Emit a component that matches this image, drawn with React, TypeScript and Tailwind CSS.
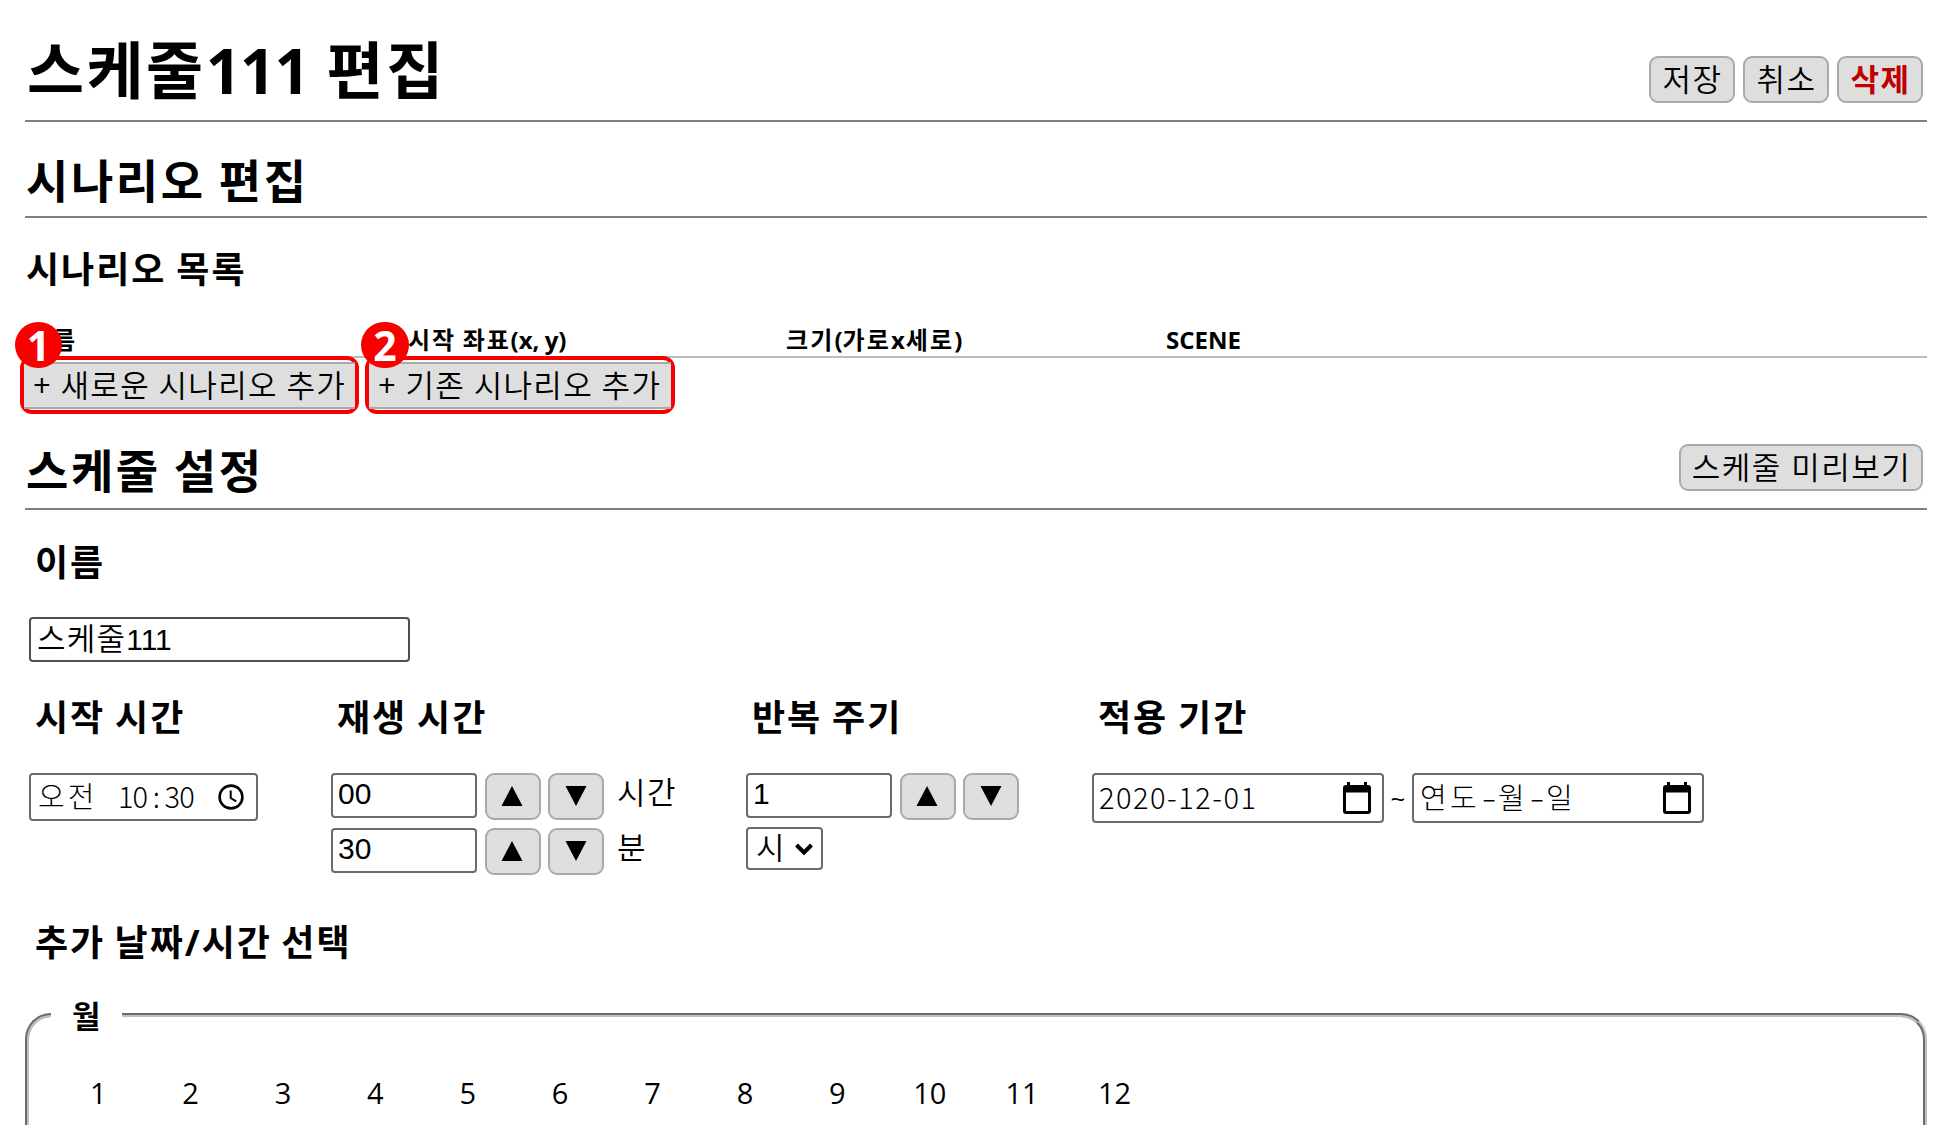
import type { ReactNode } from "react";

const months = Array.from({ length: 12 }, (_, i) => i + 1);

function Button({ children, className = "" }: { children: ReactNode; className?: string }) {
  return (
    <button
      type="button"
      className={`flex h-[47px] shrink-0 items-center justify-center rounded-[9px] border-2 border-[#a9a9a9] bg-[#dedede] pl-px text-[31px] leading-[43px] tracking-[1.5px] whitespace-nowrap ${className}`}
    >
      {children}
    </button>
  );
}

function Stepper({ value, unit }: { value: string; unit?: string }) {
  return (
    <div className="flex items-start">
      <input
        readOnly
        value={value}
        className="h-[45px] w-[146px] rounded-[4px] border-2 border-[#6b6b6b] pb-[4px] pl-[5px] font-['Liberation_Sans','Noto_Sans_CJK_KR',sans-serif] text-[30px] leading-[37px] font-normal"
      />
      <Button className="ml-2 w-[56px]">
        <svg width="22" height="20" viewBox="0 0 22 20" className="mr-[3px] mb-[2px]">
          <path d="M11 0 21.5 20H.5z" />
        </svg>
      </Button>
      <Button className="ml-[7px] w-[56px]">
        <svg width="22" height="20" viewBox="0 0 22 20" className="mr-[2px] mb-[2px]">
          <path d="M11 20 21.5 0H.5z" />
        </svg>
      </Button>
      {unit && <span className="ml-[13px] text-[31px] leading-[38px] tracking-[1.5px]">{unit}</span>}
    </div>
  );
}

function CalendarIcon() {
  return (
    <svg width="28" height="32" viewBox="0 0 28 32" className="mb-px shrink-0">
      <path
        fillRule="evenodd"
        d="M4 0h3v3h14V0h3v3h1a3 3 0 0 1 3 3v23a3 3 0 0 1-3 3H3a3 3 0 0 1-3-3V6a3 3 0 0 1 3-3h1zM3 10.500v18.500h22V10.500z"
      />
    </svg>
  );
}

function DateField({ children, className }: { children: ReactNode; className: string }) {
  return (
    <div className="flex h-[50px] w-[292px] items-center justify-between rounded-[4px] border-2 border-[#6b6b6b] pr-[11px] pl-[5px] font-['Noto_Sans_CJK_KR',sans-serif] text-[29px] leading-[42px] font-light whitespace-nowrap">
      <span className={`pb-[5px] ${className}`}>{children}</span>
      <CalendarIcon />
    </div>
  );
}

function WideHyphen() {
  return <span className="inline-block w-[18px] scale-x-150 text-center tracking-normal">-</span>;
}

function Label({ children }: { children: ReactNode }) {
  return (
    <h3 className="h-[48px] pl-[6px] text-[36px] leading-[49px] font-bold tracking-[2px] whitespace-nowrap [word-spacing:-1.5px]">
      {children}
    </h3>
  );
}

function Marked({ n, width, badge, children }: { n: number; width: string; badge: string; children: ReactNode }) {
  return (
    <div className={`relative h-[58px] ${width} rounded-[12px] border-4 border-[#f70000] py-[2px]`}>
      <button
        type="button"
        className="block h-[47px] w-full border-y-2 border-[#a9a9a9] bg-[#dedede] pl-[9px] text-left text-[31px] leading-[41px] tracking-[1.35px] whitespace-nowrap [word-spacing:-1px]"
      >
        <span className="font-normal">+</span> {children}
      </button>
      <span
        className={`absolute -top-[38px] flex h-[46px] items-center justify-center rounded-full bg-[#f70000] text-[41px] leading-[46px] font-bold text-white ${badge}`}
      >
        {n}
      </span>
    </div>
  );
}

export default function App() {
  return (
    <main className="h-[1125px] w-[1936px] overflow-hidden bg-white pr-[9px] pl-[25px] font-['Open_Sans','Noto_Sans_CJK_KR',sans-serif] font-[350] text-black">
      <header className="flex h-[122px] items-start justify-between border-b-2 border-[#808080] pr-[4px] pl-[2px]">
        <h1 className="pt-[40px] text-[62px] leading-[60px] font-bold tracking-[2.5px] whitespace-nowrap [word-spacing:-1px]">
          스케줄<span className="tracking-[-1px]">111</span> 편집
        </h1>
        <div className="flex gap-2 pt-[56px]">
          <Button className="w-[86px]">저장</Button>
          <Button className="w-[86px]">취소</Button>
          <Button className="w-[86px] font-bold text-[#bf0000]">삭제</Button>
        </div>
      </header>

      <section>
        <h2 className="h-[96px] border-b-2 border-[#808080] pt-[28px] pl-[1px] text-[46px] leading-[60px] font-bold tracking-[2.6px] [word-spacing:-1.5px]">
          시나리오 편집
        </h2>
        <h3 className="pt-[28px] pl-[1px] text-[36px] leading-[48px] font-bold tracking-[2px] [word-spacing:-1.5px]">
          시나리오 목록
        </h3>
        <div className="mt-[30px] flex h-[34px] border-b-2 border-[#bcbcbc] pl-[4px] text-[24px] leading-[31px] font-bold tracking-[1.8px]">
          <span className="w-[379px]">이름</span>
          <span className="w-[378px] [word-spacing:-1px]">
            시작 좌표<span className="tracking-normal">(x, y)</span>
          </span>
          <span className="w-[380px] tracking-[2.1px]">
            크기<span className="tracking-normal">(</span>가로<span className="tracking-[1px]">x</span>세로)
          </span>
          <span className="tracking-normal">SCENE</span>
        </div>
        <div className="-mt-[2px] -ml-[5px] flex gap-[6px]">
          <Marked n={1} width="w-[339px]" badge="-left-[9px] w-[47px]">
            새로운 시나리오 추가
          </Marked>
          <Marked n={2} width="w-[310px]" badge="-left-[8px] w-[48px]">
            기존 시나리오 추가
          </Marked>
        </div>
      </section>

      <section>
        <div className="flex h-[96px] items-start justify-between border-b-2 border-[#808080] pr-[4px] pl-px">
          <h2 className="pt-[27px] text-[46px] leading-[59px] font-bold tracking-[2.6px] [word-spacing:-1.5px]">
            스케줄 설정
          </h2>
          <Button className="mt-[30px] w-[244px]">스케줄 미리보기</Button>
        </div>
        <div className="pt-[28px] pl-[4px]">
          <Label>이름</Label>
          <div
            role="textbox"
            className="mt-[31px] h-[45px] w-[381px] rounded-[4px] border-2 border-[#4f4f4f] pl-[6px] font-['Liberation_Sans','Noto_Sans_CJK_KR',sans-serif] text-[30px] leading-[41px] font-normal"
          >
            <span className="text-[31px] leading-[38px] font-[350] tracking-[1.2px]">스케줄</span>111
          </div>
          <div className="mt-[31px] flex items-start">
            <div className="w-[302px]">
              <Label>시작 시간</Label>
              <div className="mt-[32px] flex h-[48px] w-[229px] items-center rounded-[4px] border-2 border-[#6b6b6b] pr-[12px] pl-[7px] font-['Noto_Sans_CJK_KR',sans-serif] text-[29px] leading-[40px] font-light whitespace-pre">
                <span className="w-[80px] pb-[5px] tracking-[3px]">오전</span>
                <span className="flex-1 pb-[5px] tracking-[-0.9px]">10 : 30</span>
                <svg width="26" height="26" viewBox="0 0 26 26" fill="none" stroke="black">
                  <circle cx="13" cy="13" r="11.400" strokeWidth="2.600" />
                  <path d="M12.700 6.500V14l5.500 3.300" strokeWidth="2" />
                </svg>
              </div>
            </div>
            <div className="w-[415px]">
              <Label>재생 시간</Label>
              <div className="mt-[32px] flex flex-col gap-[8px]">
                <Stepper value="00" unit="시간" />
                <Stepper value="30" unit="분" />
              </div>
            </div>
            <div className="w-[346px]">
              <Label>반복 주기</Label>
              <div className="mt-[32px]">
                <Stepper value="1" />
                <div className="mt-[7px] flex h-[43px] w-[77px] items-center justify-between rounded-[4px] border-2 border-[#6b6b6b] pr-[8px] pl-[8px] text-[31px] leading-[36px]">
                  <span className="pb-[3px]">시</span>
                  <svg width="18" height="12" viewBox="0 0 18 12" fill="none" stroke="black">
                    <path d="m1.500 2 7.500 7.500L16.500 2" strokeWidth="4" />
                  </svg>
                </div>
              </div>
            </div>
            <div>
              <Label>적용 기간</Label>
              <div className="mt-[32px] flex items-center">
                <DateField className="tracking-[1.5px]">2020-12-01</DateField>
                <span className="w-[28px] text-center text-[26px] font-normal">~</span>
                <DateField className="pl-px tracking-[3.3px]">
                  연도
                  <WideHyphen />월
                  <WideHyphen />일
                </DateField>
              </div>
            </div>
          </div>
        </div>

        <h3 className="mt-[43px] h-[48px] pt-px pl-[10px] text-[36px] leading-[48px] font-bold tracking-[2px] [word-spacing:-2px]">
          추가 날짜/시간 선택
        </h3>
        <fieldset className="mt-[34px] h-[200px] rounded-[26px] border-4 border-[#c0c0c0] pl-[23px] [border-style:groove]">
          <legend className="-ml-px px-[21px] text-[31px] leading-[30px] font-bold">
            <span className="relative top-px">월</span>
          </legend>
          <div className="mt-[43px] flex text-[29px] leading-[40px] font-normal">
            {months.map((m) => (
              <span key={m} className="w-[92.4px] text-center">
                {m}
              </span>
            ))}
          </div>
        </fieldset>
      </section>
    </main>
  );
}
